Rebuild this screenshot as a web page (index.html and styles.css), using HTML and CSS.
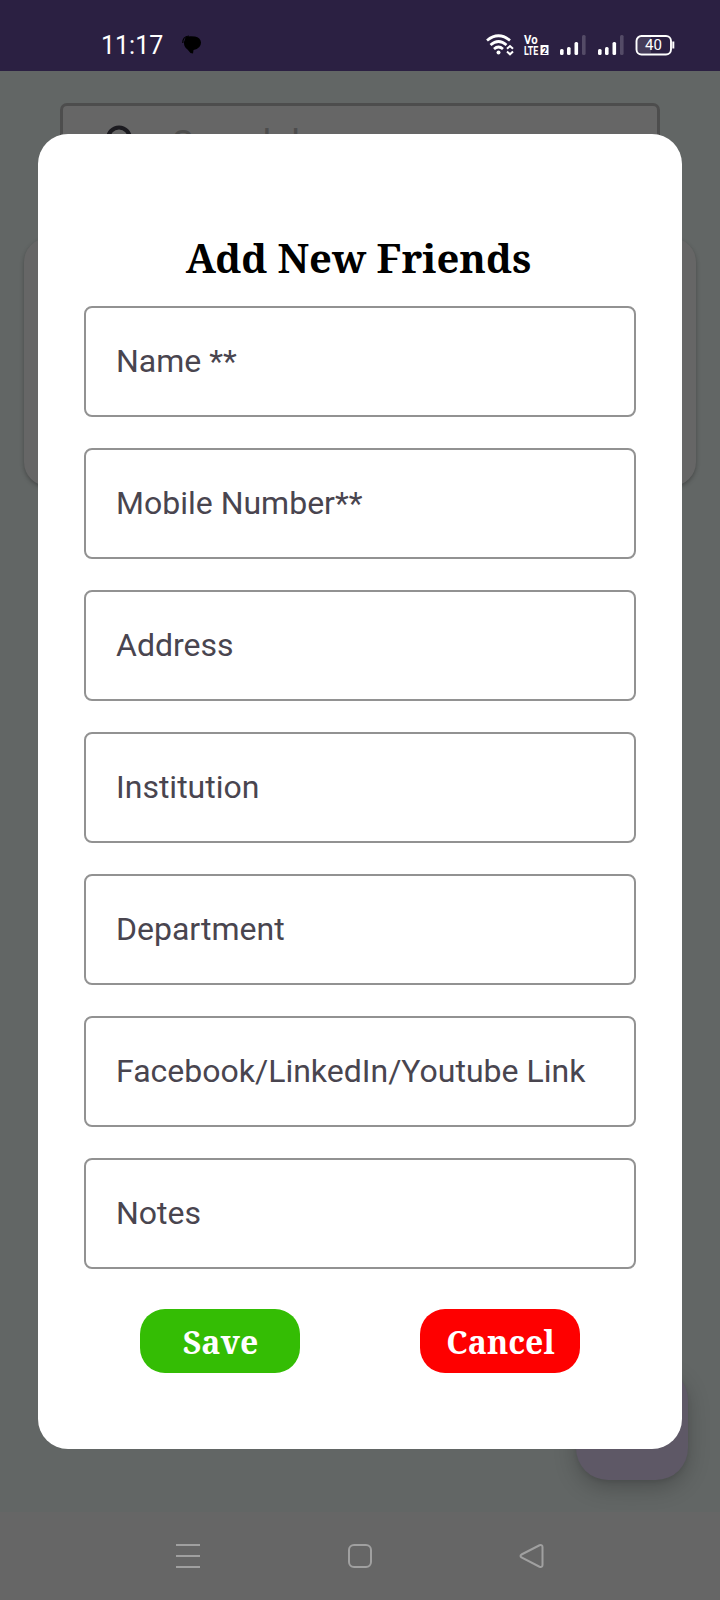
FILE: index.html
```
<!DOCTYPE html>
<html lang="en">
<head>
<meta charset="utf-8">
<title>Add New Friends</title>
<link rel="stylesheet" href="styles.css">
</head>
<body>
<div class="screen">
  <header class="status">
    <span class="clock">11:17</span>
    <svg class="chat" width="20" height="20" viewBox="0 0 20 20"><path d="M3.500 2.500Q6 .5 13 1.500Q18.500 2.500 19 7.500Q19 13.500 11.500 15L11 18.500L8.500 18L5.500 14.500Q1.500 12 2 7z" fill="#000"/><path d="M.8 8Q.5 1.500 7 1" fill="none" stroke="#000" stroke-width="1.200"/></svg>
    <div class="status-icons">
      <svg class="wifi" width="28" height="22" viewBox="0 0 28 22" fill="none" stroke="#fff" stroke-width="2.700"><path d="M1 6.500Q12.500-3 24 6.500M4.500 11Q12.500 4 20.500 11M8 15Q12.500 11 17 15"/><circle cx="12.500" cy="18.500" r="2" fill="#fff" stroke="none"/><path d="M21 14.800L24 12l3 2.800M21 17.500l3 2.800l3-2.800" stroke-width="2"/></svg>
      <svg class="volte" width="26" height="22" viewBox="0 0 26 22" fill="#fff"><text transform="translate(0 10.200) scale(.84 1)" class="tiny">Vo</text><text transform="translate(0 21) scale(.66 1)" class="tiny">LTE</text><rect x="16.500" y="11" width="8" height="10"/><text x="18" y="19.500" class="two">2</text></svg>
      <svg class="signal" width="28" height="22" viewBox="0 0 28 22" fill="#fff"><rect x="1" y="15" width="3.600" height="6" rx="1.500"/><rect x="8" y="13" width="3.600" height="8" rx="1.500"/><rect x="15.500" y="8" width="3.600" height="13" rx="1.500"/><rect x="23" y="1" width="3.600" height="20" rx="1.500" fill="#544b67"/></svg>
      <svg class="signal second" width="28" height="22" viewBox="0 0 28 22" fill="#fff"><rect x="1" y="15" width="3.600" height="6" rx="1.500"/><rect x="8" y="13" width="3.600" height="8" rx="1.500"/><rect x="15.500" y="8" width="3.600" height="13" rx="1.500"/><rect x="23" y="1" width="3.600" height="20" rx="1.500" fill="#544b67"/></svg>
      <svg class="battery" width="40" height="22" viewBox="0 0 40 22"><path d="M6 3h10v16H6q-4 0-4-4V7q0-4 4-4z" fill="#453c59"/><rect x="1.500" y="2" width="34.500" height="18.500" rx="5" fill="none" stroke="#fff" stroke-width="1.900"/><path d="M38.300 7.500v7" stroke="#fff" stroke-width="2"/><text x="18.500" y="16.200" text-anchor="middle" class="percent">40</text></svg>
    </div>
  </header>
  <main class="page">
    <div class="search">
      <svg width="40" height="40" viewBox="0 0 40 40" fill="none" stroke="#1c1b20" stroke-width="4"><circle cx="15" cy="14.500" r="11"/><path d="M23 23l12 12"/></svg>
      <span>Search here</span>
    </div>
    <div class="card"></div>
    <div class="fab"></div>
  </main>
  <nav class="navbar">
    <svg width="26" height="26" viewBox="0 0 26 26"><path d="M1 2h24M1 13h24M1 24h24"/></svg>
    <svg width="26" height="26" viewBox="0 0 26 26"><rect x="2" y="2" width="22" height="22" rx="5"/></svg>
    <svg width="26" height="26" viewBox="0 0 26 26"><path d="M2.500 11.500L20.500 2.300Q23.500 1.500 23.500 4v18q0 2.500-3 1.700L2.500 14.500q-2-1.500 0-3z"/></svg>
  </nav>
  <section class="dialog">
    <h1 class="title">Add New Friends</h1>
    <div class="fields">
      <div class="field">Name **</div>
      <div class="field">Mobile Number**</div>
      <div class="field">Address</div>
      <div class="field">Institution</div>
      <div class="field">Department</div>
      <div class="field">Facebook/LinkedIn/Youtube Link</div>
      <div class="field">Notes</div>
    </div>
    <div class="actions">
      <button class="btn save">Save</button>
      <button class="btn cancel">Cancel</button>
    </div>
  </section>
</div>
</body>
</html>
```
FILE: styles.css
```
* { box-sizing: border-box; }
body { margin: 0; }
svg { display: block; flex: none; overflow: visible; }
.screen {
  position: relative;
  display: flex;
  flex-direction: column;
  width: 720px;
  height: 1600px;
  overflow: hidden;
  background: #626665;
  font-family: Roboto, sans-serif;
}
.status {
  display: flex;
  align-items: center;
  height: 71px;
  padding: 19px 45px 0 101px;
  background: #2b2042;
  color: #fff;
}
.clock { width: 66px; padding-top: 2px; font: 25px/28px Roboto, sans-serif; }
.chat { margin-left: 15px; }
.status-icons { display: flex; margin-left: auto; }
.volte { margin-left: 10px; }
.signal { margin-left: 9px; }
.second { margin-left: 10px; }
.battery { margin-left: 10px; }
.tiny { font: bold 13.500px Roboto, sans-serif; }
.two { font: bold 9px Roboto, sans-serif; fill: #2b2042; }
.percent { font: 15px Roboto, sans-serif; fill: #fff; }
.page { display: flex; flex-direction: column; height: 1441px; padding: 32px 24px 32px; }
.search {
  display: flex;
  align-items: flex-start;
  gap: 28px;
  height: 94px;
  margin: 0 36px;
  padding: 18px 41px;
  border: 3px solid #4d4d4d;
  border-radius: 7px;
  background: #666;
  color: #4d4d4d;
  font-size: 36px;
  line-height: 40px;
}
.card {
  height: 248px;
  margin-top: 41px;
  border-radius: 24px;
  background: #666;
  box-shadow: 0 2px 4px rgba(0, 0, 0, .28);
}
.fab {
  width: 112px;
  height: 112px;
  margin: auto 8px 0 auto;
  border-radius: 32px;
  background: #5e5866;
  box-shadow: 0 8px 22px rgba(0, 0, 0, .22), 0 2px 4px rgba(0, 0, 0, .08);
}
.navbar {
  display: flex;
  align-items: center;
  justify-content: space-between;
  height: 88px;
  padding: 0 175px;
  background: #666;
}
.navbar svg { fill: none; stroke: #a0a0a0; stroke-width: 2; }
.dialog {
  position: absolute;
  top: 134px;
  left: 38px;
  width: 644px;
  height: 1315px;
  padding: 97px 46px 0;
  border-radius: 30px;
  background: #fff;
}
.title {
  height: 54px;
  margin: 0 3px 21px 0;
  color: #000;
  font: bold 40px/54px "Noto Serif", "Droid Serif", "DejaVu Serif", serif;
  text-align: center;
  white-space: nowrap;
}
.fields { display: flex; flex-direction: column; gap: 31px; }
.field {
  height: 111px;
  padding: 0 30px;
  border: 2px solid #929292;
  border-radius: 8px;
  color: #49454f;
  font-size: 32px;
  line-height: 106px;
  white-space: nowrap;
}
.actions { display: flex; justify-content: space-between; padding: 40px 56px 0; }
.btn {
  width: 160px;
  height: 64px;
  padding: 2px 0 0 1px;
  border: 0;
  border-radius: 25px;
  color: #fff;
  font: bold 32px/62px "Noto Serif", "Droid Serif", "DejaVu Serif", serif;
}
.save { background: #34bd04; }
.cancel { background: #fe0000; }
```
